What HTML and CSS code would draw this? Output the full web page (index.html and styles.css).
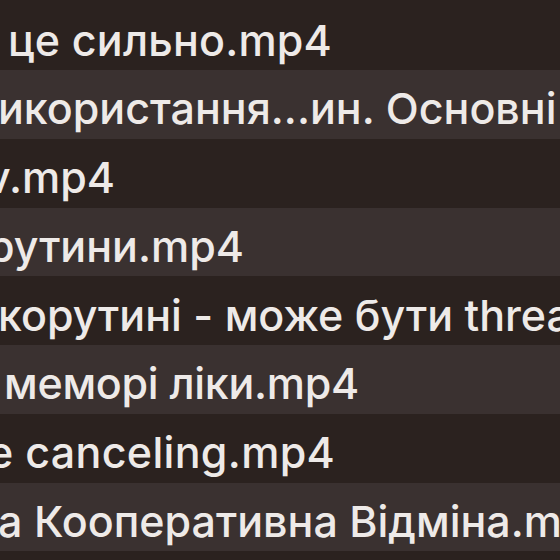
FILE: index.html
```html
<!DOCTYPE html>
<html lang="uk">
<head>
<meta charset="utf-8">
<link rel="stylesheet" href="styles.css">
</head>
<body>
<div class="list">
  <div class="row dark"><span class="name r1">це сильно.mp4</span></div>
  <div class="row light"><span class="name r2">икористання...ин. Основні</span></div>
  <div class="row dark"><span class="name r3">v.mp4</span></div>
  <div class="row light"><span class="name r4">рутини.mp4</span></div>
  <div class="row dark"><span class="name r5">корутині - може бути threads</span></div>
  <div class="row light"><span class="name r6">меморі ліки.mp4</span></div>
  <div class="row dark"><span class="name r7">e canceling.mp4</span></div>
  <div class="row light"><span class="name r8">а Кооперативна Відміна.mp4</span></div>
</div>
</body>
</html>
```

FILE: styles.css
```css
html, body {
  margin: 0;
  padding: 0;
  background: #2b221f;
}
body {
  width: 560px;
  height: 560px;
}
.list {
  padding-top: 1.25px;
  display: flex;
  flex-direction: column;
  width: 560px;
  overflow: hidden;
}
.row {
  height: 68.75px;
  display: flex;
  align-items: center;
  overflow: hidden;
  white-space: nowrap;
}
.dark { background: #2b221f; }
.light { background: #3a3130; }
.name {
  font-family: Inter, "Noto Sans", sans-serif;
  font-size: 43px;
  font-weight: 500;
  color: #eeeae8;
  line-height: 1;
  padding-top: 9px;
}
.r1 { margin-left: 8px; letter-spacing: 0.2px; }
.r2 { margin-left: -2px; }
.r3 { margin-left: -14px; }
.r4 { margin-left: -12px; }
.r5 { margin-left: -2px; }
.r6 { margin-left: 4px; letter-spacing: -0.3px; }
.r7 { margin-left: -12px; letter-spacing: 0.3px; }
.r8 { margin-left: -2px; }
```
